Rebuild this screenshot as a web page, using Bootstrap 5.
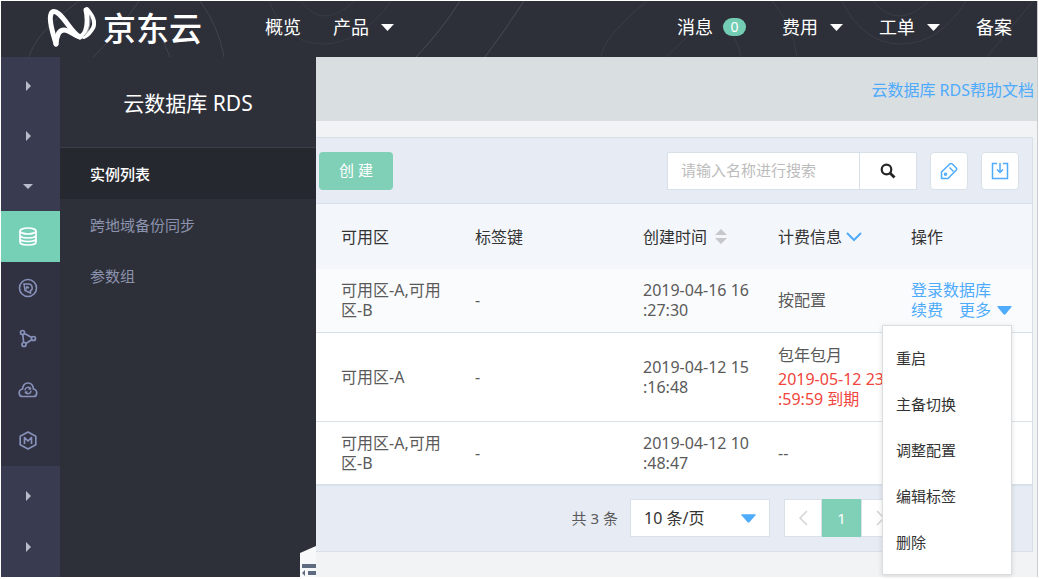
<!DOCTYPE html>
<html lang="zh-CN">
<head>
<meta charset="utf-8">
<meta name="viewport" content="width=device-width, initial-scale=1">
<title>云数据库 RDS</title>
<link href="https://cdn.jsdelivr.net/npm/bootstrap@5.3.0/dist/css/bootstrap.min.css" rel="stylesheet">
<style>
  :root { --dark:#2e3039; --green:#7fd0b6; --blue:#4fabfc; --line:#d8e1ea; --pale:#e7ebf3; }
  body { font-family:"Noto Sans","Noto Sans CJK SC",sans-serif; font-size:15px; line-height:20px; color:#5a5a5a; background:#fff; min-height:100vh; padding:1px 1px 2px 1px; }
  a { text-decoration:none; color:var(--blue); }
  svg { display:block; flex:none; }
  .shell { background:#f2f3f5; border-right:1px solid #c9cbd0; }

  /* top bar */
  .topbar { background:var(--dark); height:56px; padding:0 25px 4px 46px; }
  .rings { position:absolute; inset:0; width:100%; height:100%; }
  .topbar a { color:#fff; font-size:18px; line-height:24px; }
  .topbar .brand { font-family:"Noto Sans CJK SC",sans-serif; font-size:33px; line-height:48px; width:218px; font-weight:500; gap:7px; }
  .badge-count { background:#72cdb4; font-size:14px; line-height:18px; width:23px; height:18px; border-radius:9px; font-weight:400; padding:0; }
  .gap-nav { gap:36px; }
  .gap-caret { gap:12px; }
  .gap-count { gap:10px; }

  /* icon rail */
  .rail { width:59px; background:#393c50; flex:none; }
  .rail a { display:flex; align-items:center; justify-content:center; height:51px; color:#8791ba; padding-right:5px; }
  .rail .fold { color:#b9bdcb; }
  .rail-top { padding-top:4px; }
  .rail-top a { height:50px; }
  .rail .current { background:#76d0b6; color:#fff; }
  .rail-sub { background:#303141; }
  .rail-end { padding-top:4px; }

  /* product menu */
  .side { width:256px; background:var(--dark); flex:none; overflow:hidden; }
  .side h1 { font-size:21px; line-height:28px; color:#fff; font-weight:400; height:91px; margin:0; padding-top:2px; border-bottom:1px solid #3b3e4a; }
  .side a { display:flex; align-items:center; height:51px; padding-left:30px; color:#8c93ae; }
  .side .current { background:#26282f; color:#fff; font-weight:500; }
  .collapse-tab { position:absolute; right:0; bottom:0; border:0; padding:0; background:none; }

  /* content */
  .helpbar { background:#d9dee1; height:64px; padding:2px 3px 0; font-size:16px; }
  .panel { margin:16px 4px 0 0; border:1px solid var(--line); border-left:0; background:#fff; }
  .toolbar { background:var(--pale); height:66px; padding:0 13px 0 3px; border-bottom:1px solid var(--line); }
  .gap-tools { gap:13px; }
  .btn-create { background:var(--green); color:#fff; width:74px; height:38px; font-size:15px; border:0; border-radius:4px; padding:0; }
  .search { width:250px; height:38px; }
  .search .form-control { font-size:15px; border:1px solid var(--line); border-radius:0; padding:0 13px; }
  .search .form-control::placeholder { color:#bcbcbc; }
  .search .btn { width:58px; background:#fff; border:1px solid var(--line); border-radius:0; padding:0; color:#262626; }
  .btn-tool { width:38px; height:38px; background:#fff; border:1px solid var(--line); border-radius:4px; padding:0; color:var(--blue); }

  .grid { table-layout:fixed; width:100%; margin:0; color:#5a5a5a; line-height:20px; }
  .col-zone { width:134px; }
  .col-tag { width:168px; }
  .col-time { width:135px; }
  .col-bill { width:133px; }
  .grid th { font-weight:400; color:#333; background:#f3f7fc; height:65px; padding:0 0 0 25px; font-size:16px; vertical-align:middle; }
  .grid td { height:63px; padding:0 0 0 25px; font-size:16px; border-bottom:1px solid var(--line); vertical-align:middle; }
  .grid .hovered td { background:#fafbfd; }
  .grid .tall td { height:89px; }
  .stamp { line-break:anywhere; width:107px; }
  .due { color:#f0443c; margin-top:4px; }
  .more { border:0; background:none; padding:0; color:var(--blue); gap:6px; line-height:20px; }
  .ops .dropdown-menu { min-width:130px; padding:9px 0; margin:0; top:25px; right:0; border:1px solid #dadcde; border-radius:0; box-shadow:0 1px 5px rgba(0,0,0,.12); background:#fff; }
  .ops .dropdown-item { font-size:15px; line-height:46px; height:46px; padding:0 13px; color:#333; }

  .pager { background:var(--pale); height:66px; border-top:1px solid var(--line); padding-right:133px; }
  .pager .form-select { width:140px; height:38px; border:1px solid var(--line); border-radius:0; font-size:16px; color:#333; padding:0 13px; background:#fff url("data:image/svg+xml,%3Csvg xmlns='http://www.w3.org/2000/svg' viewBox='0 0 16 9'%3E%3Cpath fill='%234fabfc' d='M1 0h14q1 0 .5 1L9 8.400Q8 9.200 7 8.400L.5 1Q0 0 1 0z'/%3E%3C/svg%3E") no-repeat right 13px center / 15px 9px; }
  .pager .gap-pages { margin-left:14px; }
  .pager .page-item .page-link { width:38px; height:38px; display:flex; align-items:center; justify-content:center; border:1px solid var(--line); border-radius:0; padding:0; margin:0; color:#d3d3d3; background:#fff; font-size:15px; }
  .pager .page-item.active .page-link { width:39px; background:var(--green); border-color:var(--green); color:#fff; }
</style>
</head>
<body class="d-flex flex-column">
<div class="shell flex-grow-1 d-flex flex-column">

  <header class="topbar position-relative d-flex align-items-center">
    <svg class="rings" viewBox="0 0 1036 56" preserveAspectRatio="xMinYMin slice" fill="none" stroke="#41444d" aria-hidden="true">
      <path d="M28 56Q34 32 78 0M92 56Q112 38 138 0M158 30L169 56M199 0Q218 26 223 56"/>
      <path d="M268 0Q285 43 322 43T390 0M300 0Q322 30 353 0" stroke="#383b44"/>
      <path d="M459 0Q440 30 415 56M523 0Q505 28 484 56" stroke="#484b53"/>
      <path d="M646 0Q602 36 600 56M665 56L688 34M720 24Q736 32 740 56M771 0Q792 24 796 56M841 0Q862 43 900 43T965 0M872 0Q897 30 928 0M1032 0L986 56" stroke="#3a3d46"/>
    </svg>
    <a href="#" class="brand position-relative d-flex align-items-center">
      <svg width="49" height="42" viewBox="0 0 49 42" fill="none" stroke="#fff" stroke-linecap="round" stroke-linejoin="round">
        <path d="M9 38C7 30 1 15 4 8Q6 3 12 8C19 14 26 28 33 31C41 28 41 13 39 4" stroke-width="5"/>
        <path d="M9 38Q10 24 17 24C23 24 27 30 33 31" stroke-width="5"/>
        <path d="M40 3Q50 14 46 22Q42 29 37 31" stroke-width="4"/>
        <path d="M43 10Q44 24 37 30" stroke="#9a9ca2" stroke-width="1"/>
      </svg><span>京东云</span>
    </a>
    <nav class="position-relative d-flex align-items-center flex-grow-1">
      <a href="#" class="me-4">概览</a>
      <a href="#" class="d-flex align-items-center gap-caret ms-2">产品 <svg width="13" height="7" viewBox="0 0 13 7"><path d="M0 0h13L6.500 7z" fill="#fff"/></svg></a>
      <div class="d-flex align-items-center gap-nav ms-auto">
        <a href="#" class="d-flex align-items-center gap-count">消息 <span class="badge badge-count">0</span></a>
        <a href="#" class="d-flex align-items-center gap-caret">费用 <svg width="13" height="7" viewBox="0 0 13 7"><path d="M0 0h13L6.500 7z" fill="#fff"/></svg></a>
        <a href="#" class="d-flex align-items-center gap-caret">工单 <svg width="13" height="7" viewBox="0 0 13 7"><path d="M0 0h13L6.500 7z" fill="#fff"/></svg></a>
        <a href="#">备案</a>
      </div>
    </nav>
  </header>

  <div class="d-flex flex-grow-1">
    <nav class="rail" aria-label="产品分类">
      <div class="rail-top">
        <a href="#" class="fold" aria-label="展开"><svg width="5" height="10" viewBox="0 0 5 10"><path d="M0 0l5 5-5 5z" fill="currentColor"/></svg></a>
        <a href="#" class="fold" aria-label="展开"><svg width="5" height="10" viewBox="0 0 5 10"><path d="M0 0l5 5-5 5z" fill="currentColor"/></svg></a>
        <a href="#" class="fold" aria-label="收起"><svg width="10" height="5" viewBox="0 0 10 5"><path d="M0 0h10L5 5z" fill="currentColor"/></svg></a>
      </div>
      <a href="#" class="current" aria-label="云数据库"><svg width="18" height="19" viewBox="0 0 18 19" fill="none" stroke="currentColor" stroke-width="1.700"><ellipse cx="9" cy="4" rx="8" ry="3"/><path d="M1 4v11c0 4 16 4 16 0V4M1 8c0 4 16 4 16 0M1 11.500c0 4 16 4 16 0"/></svg></a>
      <div class="rail-sub">
        <a href="#" aria-label="缓存"><svg width="20" height="20" viewBox="0 0 20 20" fill="none" stroke="currentColor" stroke-width="1.600"><circle cx="10" cy="10" r="8.500"/><path d="M6 6h4.500c4.500 0 4.500 6 2 6.500v2.500l-5.500-2.500zM8.500 8.500v3M8.500 8.500l2.500 1.500" stroke-width="1.500"/></svg></a>
        <a href="#" aria-label="分布式"><svg width="18" height="19" viewBox="0 0 18 19" fill="none" stroke="currentColor" stroke-width="1.700"><circle cx="3.500" cy="3.500" r="2"/><circle cx="14.500" cy="9.500" r="2"/><circle cx="5" cy="15.500" r="2"/><path d="M3.800 5.500l.8 8M5.500 4.500l7.200 4M6.800 14.500l6-3.800"/></svg></a>
        <a href="#" aria-label="云缓存"><svg width="20" height="16" viewBox="0 0 20 16" fill="none" stroke="currentColor" stroke-width="1.700"><path d="M5 14.500h10.500c4 0 4.500-6.500 0-7.500C15 2.500 12.500 1 10 1S5 2.500 4.500 7c-4.500 1-4.500 7.500.5 7.500z"/><path d="M7 8.500c0-4 5-4 6-1.500M13 8.500c0 4-5 4-6 1.500M7 10h2.500M13 7h-2.500" stroke-width="1.300"/></svg></a>
        <a href="#" aria-label="MongoDB"><svg width="18" height="19" viewBox="0 0 18 19" fill="none" stroke="currentColor" stroke-width="1.700" stroke-linejoin="round"><path d="M9 1l7.800 4.200v8.600L9 18l-7.800-4.200V5.200z"/><path d="M5.500 13V6.500L9 10l3.500-3.500V13"/></svg></a>
      </div>
      <div class="rail-end">
        <a href="#" class="fold" aria-label="展开"><svg width="5" height="10" viewBox="0 0 5 10"><path d="M0 0l5 5-5 5z" fill="currentColor"/></svg></a>
        <a href="#" class="fold" aria-label="展开"><svg width="5" height="10" viewBox="0 0 5 10"><path d="M0 0l5 5-5 5z" fill="currentColor"/></svg></a>
      </div>
    </nav>

    <aside class="side position-relative">
      <h1 class="d-flex align-items-center justify-content-center">云数据库 RDS</h1>
      <a href="#" class="current">实例列表</a>
      <a href="#">跨地域备份同步</a>
      <a href="#">参数组</a>
      <button class="collapse-tab" type="button" aria-label="收起菜单">
        <svg width="16" height="31" viewBox="0 0 16 31"><path d="M0 7L16 0v31H0z" fill="#f7f8f9"/><path d="M2 18h14v4H2zM8 25h8v4H8zM5 24v6l-3-3z" fill="#5f6b80"/></svg>
      </button>
    </aside>

    <main class="flex-grow-1">
      <div class="helpbar d-flex align-items-center justify-content-end"><a href="#">云数据库 RDS帮助文档</a></div>
      <section class="panel">
        <div class="toolbar gap-tools d-flex align-items-center">
          <button class="btn btn-create" type="button">创 建</button>
          <div class="input-group search ms-auto flex-nowrap">
            <input type="text" class="form-control" placeholder="请输入名称进行搜索" aria-label="名称">
            <button class="btn d-flex align-items-center justify-content-center" type="button" aria-label="搜索"><svg width="16" height="16" viewBox="0 0 16 16" fill="none" stroke="currentColor"><circle cx="6.500" cy="6.500" r="4.800" stroke-width="2.200"/><path d="M10 10l4.500 4.500" stroke-width="2.800"/></svg></button>
          </div>
          <button class="btn btn-tool d-flex align-items-center justify-content-center" type="button" aria-label="编辑标签"><svg width="18" height="18" viewBox="0 0 18 18" fill="none" stroke="currentColor" stroke-width="1.500" stroke-linejoin="round"><path d="M1.500 16.500V10l8.500-8.200q1-.8 2 0l4.300 4.200q.8 1 0 2L8 16.500z"/><circle cx="5.500" cy="12.200" r="1"/><path d="M9.500 5.500l4 4"/></svg></button>
          <button class="btn btn-tool d-flex align-items-center justify-content-center" type="button" aria-label="导出"><svg width="18" height="18" viewBox="0 0 18 18" fill="none" stroke="currentColor" stroke-width="1.500"><path d="M6 1.500H1.500v15h15v-15H12M9 1v9M6 7.500l3 3 3-3"/></svg></button>
        </div>

        <table class="grid">
          <colgroup><col class="col-zone"><col class="col-tag"><col class="col-time"><col class="col-bill"><col></colgroup>
          <thead>
            <tr>
              <th scope="col">可用区</th>
              <th scope="col">标签键</th>
              <th scope="col"><span class="d-flex align-items-center gap-2">创建时间 <svg width="12" height="15" viewBox="0 0 12 15"><path d="M6 0l6 6H0zM0 9h12l-6 6z" fill="#c5c7ca"/></svg></span></th>
              <th scope="col"><span class="d-flex align-items-center gap-1">计费信息 <svg width="16" height="10" viewBox="0 0 16 10"><path d="M1 1l7 7 7-7" fill="none" stroke="#4fabfc" stroke-width="2"/></svg></span></th>
              <th scope="col">操作</th>
            </tr>
          </thead>
          <tbody>
            <tr class="hovered">
              <td>可用区-A,可用区-B</td>
              <td>-</td>
              <td><div class="stamp">2019-04-16 16:27:30</div></td>
              <td>按配置</td>
              <td class="ops">
                <a href="#" class="d-block">登录数据库</a>
                <div class="d-flex">
                  <a href="#" class="me-3">续费</a>
                  <div class="dropdown">
                    <button class="more d-flex align-items-center" type="button" aria-expanded="true">更多 <svg width="15" height="9" viewBox="0 0 15 9"><path d="M1 0h13q1 0 .5 1L8.500 8.300q-1 .9-2 0L.5 1Q0 0 1 0z" fill="#4fabfc"/></svg></button>
                    <ul class="dropdown-menu show">
                      <li><a class="dropdown-item" href="#">重启</a></li>
                      <li><a class="dropdown-item" href="#">主备切换</a></li>
                      <li><a class="dropdown-item" href="#">调整配置</a></li>
                      <li><a class="dropdown-item" href="#">编辑标签</a></li>
                      <li><a class="dropdown-item" href="#">删除</a></li>
                    </ul>
                  </div>
                </div>
              </td>
            </tr>
            <tr class="tall">
              <td>可用区-A</td>
              <td>-</td>
              <td><div class="stamp">2019-04-12 15:16:48</div></td>
              <td>包年包月<div class="due stamp">2019-05-12 23:59:59 到期</div></td>
              <td></td>
            </tr>
            <tr>
              <td>可用区-A,可用区-B</td>
              <td>-</td>
              <td><div class="stamp">2019-04-12 10:48:47</div></td>
              <td>--</td>
              <td></td>
            </tr>
          </tbody>
        </table>

        <div class="pager d-flex align-items-center justify-content-end">
          <label for="size" class="me-2 pe-1">共 3 条</label>
          <select id="size" class="form-select"><option>10 条/页</option></select>
          <ul class="pagination gap-pages mb-0">
            <li class="page-item"><a class="page-link" href="#" aria-label="上一页"><svg width="9" height="16" viewBox="0 0 9 16"><path d="M8 1L1 8l7 7" fill="none" stroke="currentColor" stroke-width="1.500"/></svg></a></li>
            <li class="page-item active"><a class="page-link" href="#">1</a></li>
            <li class="page-item"><a class="page-link" href="#" aria-label="下一页"><svg width="9" height="16" viewBox="0 0 9 16"><path d="M1 1l7 7-7 7" fill="none" stroke="currentColor" stroke-width="1.500"/></svg></a></li>
          </ul>
        </div>
      </section>
    </main>
  </div>
</div>
<script src="https://cdn.jsdelivr.net/npm/bootstrap@5.3.0/dist/js/bootstrap.bundle.min.js"></script>
</body>
</html>
